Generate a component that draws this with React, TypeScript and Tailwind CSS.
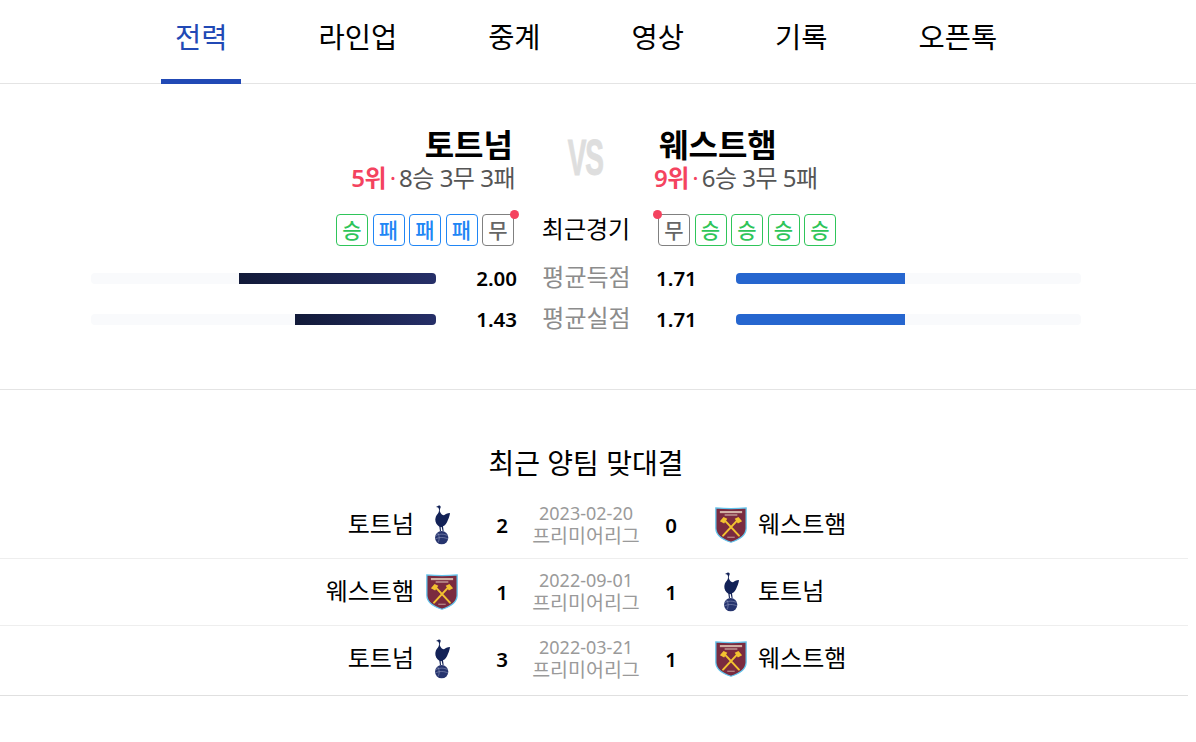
import React from "react";

function Spurs({ className = "" }: { className?: string }) {
  return (
    <svg viewBox="0 0 45 120" className={className}>
      <path
        d="M3 6 10 2C14 0 18 3 17 7 16 11 13 14 15 20 17 26 22 30 27 31 31 28 37 24 45 24 44 32 42 38 39 44 36 54 30 62 24 64L26 79H23L20 66H17L18 79H15L13 65C5 60 0 52 1 42 2 32 8 28 11 22 13 16 12 10 10 8 8 7 6 7 3 6Z"
        fill="#132257"
      />
      <circle cx="20" cy="98" r="20" fill="#26346e" />
      <path d="M2 92C12 86 28 86 38 92M1 102C12 96 28 96 39 102M8 84C14 92 14 106 8 113" stroke="#9aa3c4" strokeWidth="1.600" fill="none" />
    </svg>
  );
}

function Hammers({ className = "" }: { className?: string }) {
  return (
    <svg viewBox="0 0 30 34" className={className}>
      <path
        d="M.7.9C10 1.800 20 1.800 29.300.9V20C29.300 27 22 31 15 33.300 8 31 .7 27 .7 20Z"
        fill="#7a2b3f"
        stroke="#63c4ec"
        strokeWidth="1.200"
      />
      <rect x="4.500" y="3.800" width="21" height="2" fill="#e8d4c0" opacity=".8" />
      <rect x="9" y="6.800" width="12" height="1.500" fill="#e8d4c0" opacity=".6" />
      <path d="M8 11.500 22.500 27M22 11.500 7.500 27" stroke="#f2c230" strokeWidth="1.900" strokeLinecap="round" />
      <path d="M4.500 13.500 8 9.500l3.500 1.500-3 4.500zM25.500 13.500 22 9.500l-3.500 1.500 3 4.500z" fill="#f2c230" />
      <rect x="11.500" y="28" width="7" height="1.200" fill="#e8d4c0" opacity=".55" />
    </svg>
  );
}

const tabs = ["전력", "라인업", "중계", "영상", "기록", "오픈톡"];

function Badge({ r }: { r: string }) {
  const cls =
    r === "승"
      ? "border-[#2fc55a] text-[#2fc55a]"
      : r === "패"
        ? "border-[#2086f5] text-[#2086f5]"
        : "border-[#808080] text-[#666666]";
  return (
    <span className={`flex h-[32px] w-[32px] items-center justify-center rounded-[4px] border text-[21px] font-medium leading-none ${cls}`}>
      {r}
    </span>
  );
}

function Dot({ className }: { className: string }) {
  return <span className={`absolute top-[-4px] h-[9px] w-[9px] rounded-full bg-[#f4435f] ${className}`} />;
}

function StatRow({ label, a, b, aw, bw }: { label: string; a: string; b: string; aw: number; bw: number }) {
  return (
    <div className="flex h-[41px] items-center">
      <div className="flex h-[11px] w-[345px] justify-end rounded-[4px] bg-[#f9fafc]">
        <div className="h-full rounded-r-[4px] bg-gradient-to-r from-[#121a39] to-[#262f68]" style={{ width: aw }} />
      </div>
      <span className="w-[81px] text-right text-[20.500px] font-semibold text-black">{a}</span>
      <span className="w-[139px] pb-[4px] text-center text-[24px] text-[#8c8c8c]">{label}</span>
      <span className="w-[40px] text-left text-[20.500px] font-semibold text-black">{b}</span>
      <div className="ml-[40px] flex h-[11px] w-[345px] rounded-[4px] bg-[#f9fafc]">
        <div className="h-full rounded-l-[4px] bg-[#2666cf]" style={{ width: bw }} />
      </div>
    </div>
  );
}

function Logo({ t }: { t: string }) {
  return t === "토트넘" ? <Spurs className="h-[40px] w-[15px]" /> : <Hammers className="h-[36px] w-[32px]" />;
}

function MatchRow({ h, hs, d, as, a, cls }: { h: string; hs: number; d: string; as: number; a: string; cls: string }) {
  return (
    <div className={`flex items-center border-b ${cls}`}>
      <div className="flex w-[460px] items-center justify-end">
        <span className="pb-[2px] text-[24px] text-black">{h}</span>
        <span className="ml-[10px] flex w-[36px] justify-center"><Logo t={h} /></span>
      </div>
      <span className="ml-[12px] w-[60px] text-center text-[20.500px] font-semibold text-black">{hs}</span>
      <div className="flex w-[108px] flex-col items-center text-[#9a9a9a]">
        <div className="text-[18px] leading-[21px]">{d}</div>
        <div className="pt-[1px] text-[19.500px] leading-[22px]">프리미어리그</div>
      </div>
      <span className="ml-[1px] w-[60px] text-center text-[20.500px] font-semibold text-black">{as}</span>
      <div className="ml-[12px] flex items-center">
        <span className="flex w-[36px] justify-center"><Logo t={a} /></span>
        <span className="ml-[9px] pb-[2px] text-[24px] text-black">{a}</span>
      </div>
    </div>
  );
}

export default function App() {
  return (
    <div className="h-[742px] w-[1196px] overflow-hidden bg-white font-['Noto_Sans','Noto_Sans_CJK_KR',sans-serif]">
      <nav className="flex h-[84px] gap-[63px] border-b border-[#e4e4e4] pl-[161px]">
        {tabs.map((t, i) => (
          <div
            key={t}
            className={`flex h-[84px] items-start px-[14px] pt-[16px] text-[28.500px] ${i === 0 ? "border-b-[5px] border-[#2149b5] text-[#2149b5]" : "text-black"}`}
          >
            {t}
          </div>
        ))}
      </nav>

      <section className="h-[305px]">
        <div className="flex pt-[41px]">
          <div className="flex w-[516px] flex-col items-end">
            <div className="pr-[3px] text-[32px] font-bold leading-[40px] text-black">토트넘</div>
            <div className="pr-[1px] text-[24px] leading-[26px] tracking-[-0.5px] text-[#555555]">
              <b className="font-semibold text-[#f4435f]">5위</b>
              <span className="mx-[3.500px] text-[#f4435f]">·</span>8승 3무 3패
            </div>
          </div>
          <div className="flex w-[138px] justify-center pt-[15px]">
            <span className="font-['Liberation_Sans',sans-serif] text-[50px] font-bold leading-[36px] tracking-[-2px] text-[#dedede] [-webkit-text-stroke:1px_#dedede] [transform:scaleX(.56)]">VS</span>
          </div>
          <div className="flex flex-col">
            <div className="pl-[5px] text-[32px] font-bold leading-[40px] text-black">웨스트햄</div>
            <div className="text-[24px] leading-[26px] tracking-[-0.5px] text-[#555555]">
              <b className="font-semibold text-[#f4435f]">9위</b>
              <span className="mx-[3.500px] text-[#f4435f]">·</span>6승 3무 5패
            </div>
          </div>
        </div>
        <div className="mt-[20px] flex items-center">
          <div className="relative ml-[336px] flex w-[178px] justify-between">
            {["승", "패", "패", "패", "무"].map((r, i) => <Badge key={i} r={r} />)}
            <Dot className="right-[-5px]" />
          </div>
          <span className="w-[144px] pb-[2px] text-center text-[24px] text-black">최근경기</span>
          <div className="relative flex w-[178px] justify-between">
            {["무", "승", "승", "승", "승"].map((r, i) => <Badge key={i} r={r} />)}
            <Dot className="left-[-5px]" />
          </div>
        </div>
        <div className="mt-[9px] pl-[91px]">
          <StatRow label="평균득점" a="2.00" b="1.71" aw={197} bw={169} />
          <StatRow label="평균실점" a="1.43" b="1.71" aw={141} bw={169} />
        </div>
      </section>

      <section className="border-t border-[#e4e4e4]">
        <h2 className="w-[1172px] pt-[53px] text-center text-[28px] font-normal leading-[40px] text-black">최근 양팀 맞대결</h2>
        <div className="mt-[9px] w-[1188px]">
          <MatchRow h="토트넘" hs={2} d="2023-02-20" as={0} a="웨스트햄" cls="h-[67px] border-[#eeeeee]" />
          <MatchRow h="웨스트햄" hs={1} d="2022-09-01" as={1} a="토트넘" cls="h-[67px] border-[#eeeeee]" />
          <MatchRow h="토트넘" hs={3} d="2022-03-21" as={1} a="웨스트햄" cls="h-[70px] border-[#e0e0e0] pb-[3px]" />
        </div>
      </section>
    </div>
  );
}
